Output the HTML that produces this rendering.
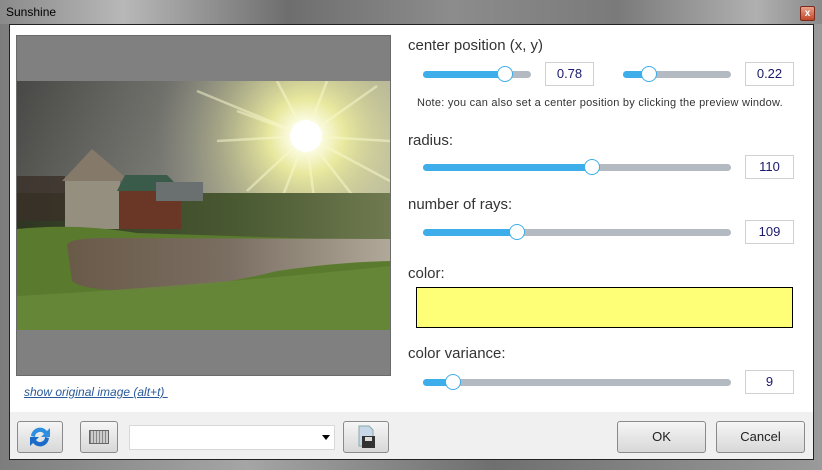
<!DOCTYPE html>
<html><head><meta charset="utf-8"><style>
*{margin:0;padding:0;box-sizing:border-box}
body{width:822px;height:470px;overflow:hidden;position:relative;font-family:"Liberation Sans",sans-serif;background:#6a6a6a}
.a{position:absolute}
.title{left:0;top:0;width:822px;height:24px;background:linear-gradient(90deg,#8a8a8a 0%,#b8b8b8 15%,#6e6e6e 35%,#8c8c8c 55%,#7a7a7a 75%,#b0b0b0 92%,#8a8a8a 100%)}
.frame{left:0;top:24px;width:822px;height:446px;background:linear-gradient(90deg,#7d7d7d,#a5a5a5 30%,#6f6f6f 60%,#9a9a9a)}
.client{left:9px;top:24px;width:805px;height:436px;background:#fff;border:1px solid #222}
.bottom{left:10px;top:412px;width:803px;height:47px;background:#f0f0f0}
.lbl{font-size:15px;color:#333}
.track{height:7px;border-radius:4px;background:#b3bac2}
.fill{height:7px;border-radius:4px;background:#3daee9;left:0;top:0}
.thumb{width:16px;height:16px;border-radius:50%;background:#fff;border:1.5px solid #3daee9;top:-5px}
.box{width:49px;height:24px;border:1px solid #d0d0d0;background:#fff;font-size:13px;color:#1a1a6a;text-align:center;line-height:22px}
.btn{border:1px solid #8a8a8a;border-radius:3px;background:linear-gradient(#f6f6f6,#e6e6e6 50%,#d8d8d8);font-size:13px;color:#222;text-align:center}
</style></head><body>
<div class="a title"></div>
<div class="a" style="left:6px;top:5px;font-size:12px;color:#000">Sunshine</div>
<div class="a" style="left:800px;top:6px;width:15px;height:15px;background:linear-gradient(#e9a18b,#c2462a);border:1px solid #7a2a1a;border-radius:2px;color:#fff;font-size:10px;font-weight:bold;text-align:center;line-height:13px">x</div>
<div class="a frame"></div>
<div class="a client"></div>
<div class="a bottom"></div>

<div class="a" style="left:16px;top:35px;width:375px;height:341px;background:#808080;border:1px solid #6a6a6a"></div>
<svg class="a" style="left:17px;top:81px" width="373" height="249" viewBox="0 0 373 249">
<defs>
<linearGradient id="sky" x1="0" y1="0" x2="1" y2="0.3"><stop offset="0" stop-color="#484846"/><stop offset="0.5" stop-color="#7e7e78"/><stop offset="1" stop-color="#c0c0a8"/></linearGradient>
<radialGradient id="sun" cx="289" cy="55" r="150" gradientUnits="userSpaceOnUse"><stop offset="0" stop-color="#ffffff"/><stop offset="0.08" stop-color="#fffff0"/><stop offset="0.25" stop-color="#f0f0a0" stop-opacity="0.9"/><stop offset="0.6" stop-color="#c8c890" stop-opacity="0.45"/><stop offset="1" stop-color="#a0a090" stop-opacity="0"/></radialGradient>
<linearGradient id="water" x1="0" y1="0" x2="1" y2="0"><stop offset="0" stop-color="#6a5a48"/><stop offset="0.5" stop-color="#7a6e62"/><stop offset="1" stop-color="#b0a898"/></linearGradient>
<linearGradient id="far" x1="0" y1="0" x2="1" y2="0"><stop offset="0" stop-color="#2e3622"/><stop offset="0.6" stop-color="#4a5a32"/><stop offset="1" stop-color="#707a50"/></linearGradient>
</defs>
<rect width="373" height="249" fill="url(#sky)"/>
<rect width="373" height="150" fill="url(#sun)"/>
<g stroke="#fafad0" stroke-width="2.5" opacity="0.5">
<line x1="289" y1="55" x2="180" y2="10"/><line x1="289" y1="55" x2="200" y2="60"/><line x1="289" y1="55" x2="230" y2="110"/><line x1="289" y1="55" x2="260" y2="130"/><line x1="289" y1="55" x2="300" y2="140"/><line x1="289" y1="55" x2="340" y2="120"/><line x1="289" y1="55" x2="373" y2="60"/><line x1="289" y1="55" x2="360" y2="5"/><line x1="289" y1="55" x2="310" y2="0"/><line x1="289" y1="55" x2="260" y2="0"/><line x1="289" y1="55" x2="220" y2="30"/><line x1="289" y1="55" x2="373" y2="100"/>
</g>
<circle cx="289" cy="55" r="16" fill="#fff"/>
<rect y="112" width="373" height="50" fill="url(#far)"/>
<rect x="0" y="95" width="48" height="45" fill="#3a3028" opacity="0.8"/>
<rect x="48" y="98" width="55" height="50" fill="#958f80"/>
<polygon points="45,100 75,68 108,96 103,100" fill="#857a6a"/>
<rect x="102" y="108" width="62" height="40" fill="#6a3626"/>
<polygon points="100,110 108,94 150,94 166,110" fill="#3a5a4a"/>
<rect x="139" y="101" width="47" height="19" fill="#6a7070"/>
<path d="M0 148 Q60 142 120 152 L373 160 L373 249 L0 249Z" fill="#5a7a2e"/>
<path d="M50 164 Q52 157 90 157 L373 158 L373 180 Q320 181 260 190 Q200 205 140 209 Q70 212 55 200Z" fill="url(#water)"/>
<path d="M0 215 Q180 205 373 185 L373 249 L0 249Z" fill="#668a38" opacity="0.8"/>
</svg>

<div class="a" style="left:24px;top:385px;font-size:12px;color:#2a5a9a;font-style:italic;text-decoration:underline">show original image (alt+t)&nbsp;</div>

<div class="a lbl" style="left:408px;top:37px">center position (x, y)</div>
<div class="a track" style="left:423px;top:71px;width:108px"><div class="a fill" style="width:82px"></div><div class="a thumb" style="left:74px"></div></div>
<div class="a box" style="left:545px;top:62px">0.78</div>
<div class="a track" style="left:623px;top:71px;width:108px"><div class="a fill" style="width:26px"></div><div class="a thumb" style="left:18px"></div></div>
<div class="a box" style="left:745px;top:62px">0.22</div>
<div class="a" style="left:417px;top:97px;font-size:11px;letter-spacing:0.25px;color:#333">Note: you can also set a center position by clicking the preview window.</div>

<div class="a lbl" style="left:408px;top:132px">radius:</div>
<div class="a track" style="left:423px;top:164px;width:308px"><div class="a fill" style="width:169px"></div><div class="a thumb" style="left:161px"></div></div>
<div class="a box" style="left:745px;top:155px">110</div>

<div class="a lbl" style="left:408px;top:196px">number of rays:</div>
<div class="a track" style="left:423px;top:229px;width:308px"><div class="a fill" style="width:94px"></div><div class="a thumb" style="left:86px"></div></div>
<div class="a box" style="left:745px;top:220px">109</div>

<div class="a lbl" style="left:408px;top:265px">color:</div>
<div class="a" style="left:416px;top:287px;width:377px;height:41px;background:#ffff77;border:1px solid #000"></div>

<div class="a lbl" style="left:408px;top:345px">color variance:</div>
<div class="a track" style="left:423px;top:379px;width:308px"><div class="a fill" style="width:30px"></div><div class="a thumb" style="left:22px"></div></div>
<div class="a box" style="left:745px;top:370px">9</div>

<div class="a btn" style="left:17px;top:421px;width:46px;height:32px"><svg width="28" height="26" viewBox="0 0 28 26" style="margin-top:2px"><path d="M5 12 A9 9 0 0 1 21 7 L24 4 L24 13 L15 13 L18 10 A5 5 0 0 0 9 13Z" fill="#2e8fe0"/><path d="M23 14 A9 9 0 0 1 7 19 L4 22 L4 13 L13 13 L10 16 A5 5 0 0 0 19 13Z" fill="#1a6cc8"/></svg></div>
<div class="a btn" style="left:80px;top:421px;width:38px;height:32px"><div style="margin:8px auto;width:20px;height:14px;border:1px solid #666;background:repeating-linear-gradient(90deg,#888 0 1px,#ccc 1px 3px)"></div></div>
<div class="a" style="left:129px;top:425px;width:206px;height:25px;background:#fff;border:1px solid #d8d8d8"></div>
<div class="a" style="left:322px;top:435px;width:0;height:0;border-left:4px solid transparent;border-right:4px solid transparent;border-top:5px solid #000"></div>
<div class="a btn" style="left:343px;top:421px;width:46px;height:32px"><svg width="24" height="26" viewBox="0 0 24 26" style="margin-top:2px"><path d="M5 2 L15 2 L19 6 L19 22 L5 22Z" fill="#c8d8e8" stroke="#8aa"/><rect x="8" y="12" width="13" height="12" fill="#333"/><rect x="11" y="13" width="7" height="4" fill="#ddd"/></svg></div>
<div class="a btn" style="left:617px;top:421px;width:89px;height:32px;line-height:30px">OK</div>
<div class="a btn" style="left:716px;top:421px;width:89px;height:32px;line-height:30px">Cancel</div>
</body></html>
